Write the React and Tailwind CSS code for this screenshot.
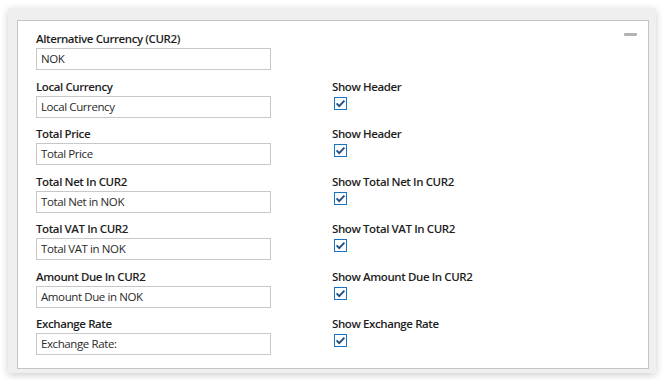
import React from 'react';

const rows = [
  { label: 'Alternative Currency (CUR2)', value: 'NOK' },
  { label: 'Local Currency', value: 'Local Currency', show: 'Show Header' },
  { label: 'Total Price', value: 'Total Price', show: 'Show Header' },
  { label: 'Total Net In CUR2', value: 'Total Net in NOK', show: 'Show Total Net In CUR2' },
  { label: 'Total VAT In CUR2', value: 'Total VAT in NOK', show: 'Show Total VAT In CUR2' },
  { label: 'Amount Due In CUR2', value: 'Amount Due in NOK', show: 'Show Amount Due In CUR2' },
  { label: 'Exchange Rate', value: 'Exchange Rate:', show: 'Show Exchange Rate' },
];

const CheckBox = () => (
  <svg width="13" height="13" viewBox="0 0 13 13" className="block">
    <rect x="0.5" y="0.5" width="12" height="12" fill="#fff" stroke="#1673c4" />
    <path d="M2.6 6.4 L5.2 9.2 L10.4 3.6" fill="none" stroke="#1d4f86" strokeWidth="1.9" />
  </svg>
);

const App = () => {
  return (
    <div className="w-[665px] h-[380px] bg-white pt-[8px] pl-[8px] font-['Open_Sans',sans-serif]">
      <div className="w-[648px] h-[365px] bg-[#efefef] pt-[12px] pl-[9px] shadow-[0_2px_8px_rgba(0,0,0,0.2)]">
        <div className="relative w-[632px] h-[349px] bg-white border border-[#c4c4c4] pt-[9px] pl-[18px]">
          {/* collapse */}
          <div className="absolute top-[12px] right-[11px] w-[13px] h-[3px] rounded-[1px] bg-[#b3b3b3]" />

          {rows.map((r) => (
            <div key={r.label} className="flex h-[47.5px]">
              <div className="w-[296px]">
                <div className="text-[11.5px] leading-[18px] font-semibold text-[#1e1e1e] tracking-[-0.4px]">{r.label}</div>
                <div className="w-[235px] h-[22px] border border-[#c8c8c8] px-[4px] text-[11.5px] leading-[20px] text-[#2a2a2a] tracking-[-0.4px]">
                  {r.value}
                </div>
              </div>
              {r.show && (
                <div>
                  <div className="text-[11.5px] leading-[18px] font-semibold text-[#1e1e1e] tracking-[-0.4px]">{r.show}</div>
                  <div className="pl-[2px] pt-[1px]">
                    <CheckBox />
                  </div>
                </div>
              )}
            </div>
          ))}
        </div>
      </div>
    </div>
  );
};

export default App;
